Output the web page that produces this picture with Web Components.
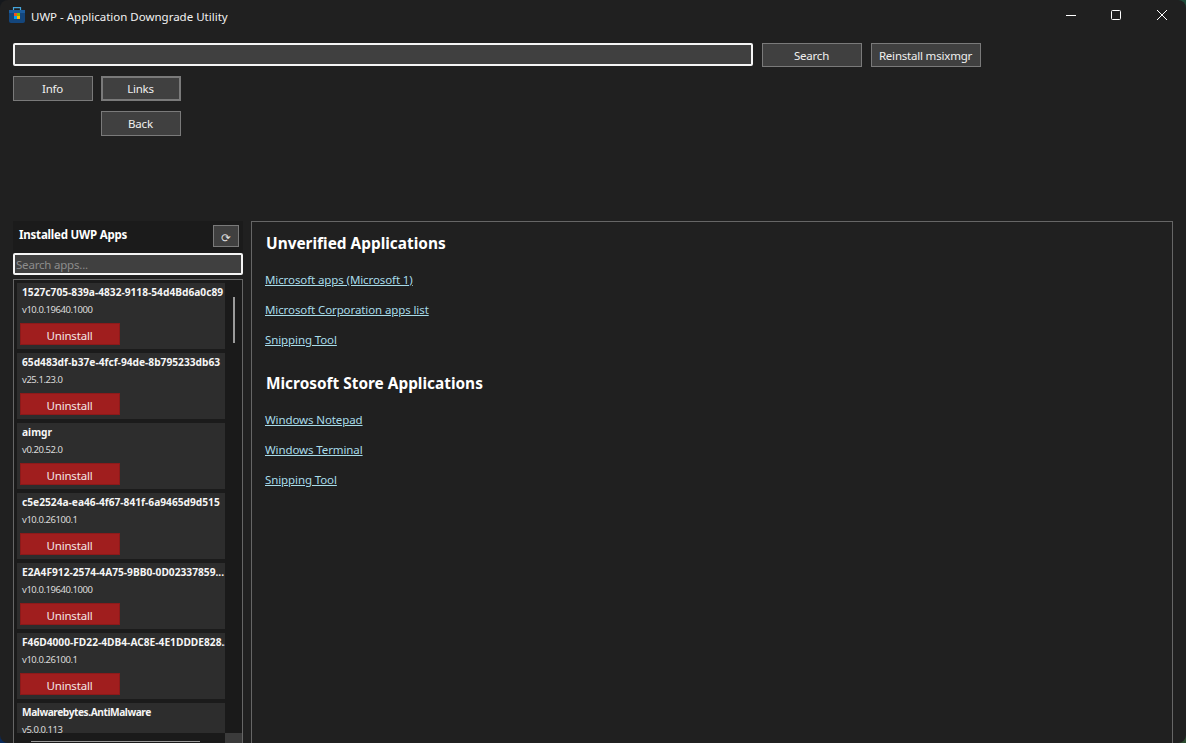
<!DOCTYPE html>
<html lang="en">
<head>
<meta charset="utf-8">
<title>UWP - Application Downgrade Utility</title>
<style>
  html, body { margin: 0; height: 100%; overflow: hidden; }
  /* desktop wallpaper showing through the rounded window corners */
  body {
    background:
      radial-gradient(circle at 100% 0, #1f4a3a 0 14px, transparent 15px),
      radial-gradient(circle at 100% 100%, #2d4a30 0 14px, transparent 15px),
      radial-gradient(circle at 0 100%, #0b2a5a 0 14px, transparent 15px),
      #15181c;
  }
</style>
</head>
<body>
<app-window>
  <title-bar>UWP - Application Downgrade Utility</title-bar>
  <tool-bar></tool-bar>
  <div slot="main" style="display:contents">
    <apps-sidebar></apps-sidebar>
    <links-panel></links-panel>
  </div>
</app-window>

<script>
const FONT = '"Noto Sans", "Open Sans", sans-serif';

class AppWindow extends HTMLElement {
  constructor() {
    super();
    this.attachShadow({ mode: 'open' }).innerHTML = `
      <style>
        :host {
          display: flex;
          flex-direction: column;
          height: 100vh;
          background: #202020;
          color: #fff;
          font-family: ${FONT};
          border-radius: 8px;
          overflow: hidden;
        }
        .main {
          display: flex;
          flex: 1;
          min-height: 0;
          gap: 8px;
          padding: 0 13px;
        }
      </style>
      <slot></slot>
      <div class="main"><slot name="main"></slot></div>
    `;
  }
}

class TitleBar extends HTMLElement {
  constructor() {
    super();
    this.attachShadow({ mode: 'open' }).innerHTML = `
      <style>
        :host {
          display: flex;
          align-items: center;
          height: 32px;
          flex: none;
          padding: 0 1px 0 9px;
          font-size: 11.5px;
          color: #f2f2f2;
        }
        .logo { width: 16px; height: 16px; margin: 0 6px 2px 0; flex: none; }
        .title { flex: 1; }
        .caps { display: flex; }
        .caps svg { width: 45px; height: 32px; display: block; }
      </style>
      <svg class="logo" viewBox="0 0 16 16">
        <path d="M4.5 4V.6h7V4" fill="none" stroke="#45a5dc" stroke-width="1.2"/>
        <path d="M0 3h16v11a2 2 0 0 1-2 2H2a2 2 0 0 1-2-2z" fill="#14467c"/>
        <path d="M0 3h16v3H0z" fill="#1c5c9c"/>
        <rect x="5" y="6" width="3" height="3" fill="#f25022"/>
        <rect x="8" y="6" width="3" height="3" fill="#7fba00"/>
        <rect x="5" y="9" width="3" height="3" fill="#00a4ef"/>
        <rect x="8" y="9" width="3" height="3" fill="#ffb900"/>
      </svg>
      <span class="title"><slot></slot></span>
      <div class="caps">
        <svg viewBox="0 0 45 32"><path d="M16 15.5h10" stroke="#fff" fill="none"/></svg>
        <svg viewBox="0 0 45 32"><rect x="16.5" y="10.5" width="9" height="9" rx="1" stroke="#fff" fill="none"/></svg>
        <svg viewBox="0 0 45 32"><path d="M17 10l10 10M27 10L17 20" stroke="#fff" fill="none"/></svg>
      </div>
    `;
  }
}

class ToolButton extends HTMLElement {
  constructor() {
    super();
    this.attachShadow({ mode: 'open' }).innerHTML = `
      <style>
        :host {
          display: flex;
          align-items: center;
          justify-content: center;
          box-sizing: border-box;
          width: 80px;
          height: 25px;
          flex: none;
          padding-right: 1px;
          background: #404040;
          border: 1px solid #7a7a7a;
          color: #f0f0f0;
          font-size: 11.5px;
          letter-spacing: -0.2px;
          white-space: nowrap;
        }
        :host([active]) { border-width: 2px; }
      </style>
      <slot></slot>
    `;
  }
}

class ToolBar extends HTMLElement {
  constructor() {
    super();
    this.attachShadow({ mode: 'open' }).innerHTML = `
      <style>
        :host {
          display: block;
          padding: 11px 13px 0;
          height: 189px;
          box-sizing: border-box;
          flex: none;
        }
        .search {
          display: flex;
          gap: 9px;
          align-items: flex-start;
        }
        .input {
          box-sizing: border-box;
          width: 740px;
          height: 23px;
          background: #404040;
          border: 2px solid #f5f5f5;
          border-radius: 2px;
        }
        .wide { width: 100px; height: 24px; }
        .reinstall { width: 110px; height: 24px; }
        .nav {
          display: grid;
          grid-template-columns: 80px 80px;
          gap: 10px 8px;
          margin-top: 9px;
        }
        .back { grid-column: 2; }
      </style>
      <div class="search">
        <div class="input"></div>
        <tool-button class="wide">Search</tool-button>
        <tool-button class="reinstall">Reinstall msixmgr</tool-button>
      </div>
      <div class="nav">
        <tool-button>Info</tool-button>
        <tool-button active>Links</tool-button>
        <tool-button class="back">Back</tool-button>
      </div>
    `;
  }
}

class AppCard extends HTMLElement {
  constructor() {
    super();
    this.attachShadow({ mode: 'open' }).innerHTML = `
      <style>
        :host {
          display: block;
          box-sizing: border-box;
          width: 208px;
          height: 66px;
          flex: none;
          background: #2d2d2d;
          padding: 2px 3px 0;
          overflow: hidden;
        }
        .name {
          font-size: 10.2px;
          font-weight: 700;
          line-height: 14px;
          padding-left: 2px;
          white-space: nowrap;
          color: #f5f5f5;
        }
        .ver {
          font-size: 9.5px;
          letter-spacing: -0.45px;
          line-height: 14px;
          margin-top: 4px;
          padding-left: 2px;
          color: #dcdcdc;
        }
        .btn {
          box-sizing: border-box;
          width: 100px;
          height: 22px;
          margin-top: 6px;
          padding: 3px 1px 0 0;
          background: #a01e1e;
          border: 1px solid #8c1a1a;
          color: #f4e6e6;
          font-size: 11.5px;
          letter-spacing: -0.2px;
          display: flex;
          align-items: center;
          justify-content: center;
        }
      </style>
      <div class="name"><slot></slot></div>
      <div class="ver"></div>
      ${this.hasAttribute('scrolled-off') ? '' : '<div class="btn">Uninstall</div>'}
    `;
    this.shadowRoot.querySelector('.ver').textContent = this.getAttribute('ver');
  }
}

class AppsSidebar extends HTMLElement {
  constructor() {
    super();
    this.attachShadow({ mode: 'open' }).innerHTML = `
      <style>
        :host {
          display: flex;
          flex-direction: column;
          width: 230px;
          flex: none;
          min-height: 0;
        }
        .head {
          display: flex;
          align-items: flex-start;
          justify-content: space-between;
          height: 32px;
          flex: none;
          background: #1b1b1b;
          padding: 4px 4px 0 6px;
          box-sizing: border-box;
          font-size: 11.5px;
          letter-spacing: -0.2px;
          font-weight: 700;
        }
        .head span:first-child { line-height: 20px; }
        .refresh {
          box-sizing: border-box;
          width: 26px;
          height: 22px;
          background: #404040;
          border: 1px solid #7a7a7a;
          display: flex;
          align-items: center;
          justify-content: center;
          font: 400 11.5px "DejaVu Sans", sans-serif;
          color: #dddddd;
          padding-top: 4px;
        }
        .filter {
          box-sizing: border-box;
          height: 22px;
          flex: none;
          background: #404040;
          border: 2px solid #f5f5f5;
          border-radius: 2px;
          color: #8d8d8d;
          font-size: 11.5px;
          letter-spacing: -0.2px;
          line-height: 19px;
          padding-left: 1px;
        }
        .list {
          flex: 1;
          min-height: 0;
          margin-top: 4px;
          box-sizing: border-box;
          border: solid #666;
          border-width: 1px 1px 0;
          display: grid;
          grid-template-columns: 1fr 17px;
          grid-template-rows: 1fr 10px;
          background: #1b1b1b;
        }
        .cards {
          overflow: hidden;
          display: flex;
          flex-direction: column;
          gap: 4px;
          padding: 3px 0 0 3px;
          min-height: 0;
        }
        .vbar { display: flex; justify-content: center; padding-top: 17px; background: #1a1a1a; }
        .vbar i { display: block; width: 2px; height: 46px; background: #9a9a9a; }
        .hbar { background: #1a1a1a; display: flex; align-items: flex-end; padding: 0 0 1px 17px; }
        .hbar i { display: block; width: 169px; height: 1px; background: #9a9a9a; }
        .corner { background: #3b3b3b; }
        .tight { letter-spacing: -0.45px; }
      </style>
      <div class="head"><span>Installed UWP Apps</span><span class="refresh">⟳</span></div>
      <div class="filter">Search apps...</div>
      <div class="list">
        <div class="cards">
          <app-card ver="v10.0.19640.1000">1527c705-839a-4832-9118-54d4Bd6a0c89</app-card>
          <app-card ver="v25.1.23.0">65d483df-b37e-4fcf-94de-8b795233db63</app-card>
          <app-card ver="v0.20.52.0">aimgr</app-card>
          <app-card ver="v10.0.26100.1">c5e2524a-ea46-4f67-841f-6a9465d9d515</app-card>
          <app-card ver="v10.0.19640.1000">E2A4F912-2574-4A75-9BB0-0D02337859...</app-card>
          <app-card ver="v10.0.26100.1">F46D4000-FD22-4DB4-AC8E-4E1DDDE828...</app-card>
          <app-card ver="v5.0.0.113" scrolled-off><span class="tight">Malwarebytes.AntiMalware</span></app-card>
        </div>
        <div class="vbar"><i></i></div>
        <div class="hbar"><i></i></div>
        <div class="corner"></div>
      </div>
    `;
  }
}

class LinksPanel extends HTMLElement {
  constructor() {
    super();
    const groups = [
      ['Unverified Applications', ['Microsoft apps (Microsoft 1)', 'Microsoft Corporation apps list', 'Snipping Tool']],
      ['Microsoft Store Applications', ['Windows Notepad', 'Windows Terminal', 'Snipping Tool']]
    ];
    const html = groups.map(([head, links]) => `
      <h2>${head}</h2>
      ${links.map(l => `<a href="#">${l}</a>`).join('')}
    `).join('');
    this.attachShadow({ mode: 'open' }).innerHTML = `
      <style>
        :host {
          display: flex;
          flex-direction: column;
          align-items: flex-start;
          flex: 1;
          box-sizing: border-box;
          border: solid #666;
          border-width: 1px 1px 0;
          padding: 11px 14px 0 13px;
          background: #202020;
        }
        h2 {
          margin: 0 0 17px 1px;
          font-size: 15.4px;
          line-height: 22px;
          font-weight: 700;
          color: #fff;
        }
        a {
          display: block;
          font-size: 11.5px;
          letter-spacing: -0.1px;
          line-height: 16px;
          height: 16px;
          margin-bottom: 14px;
          color: #a8dcea;
          text-decoration: underline;
        }
        a + h2 { margin-top: 11px; }
      </style>
      ${html}
    `;
  }
}

customElements.define('app-window', AppWindow);
customElements.define('title-bar', TitleBar);
customElements.define('tool-button', ToolButton);
customElements.define('tool-bar', ToolBar);
customElements.define('app-card', AppCard);
customElements.define('apps-sidebar', AppsSidebar);
customElements.define('links-panel', LinksPanel);
</script>
</body>
</html>
